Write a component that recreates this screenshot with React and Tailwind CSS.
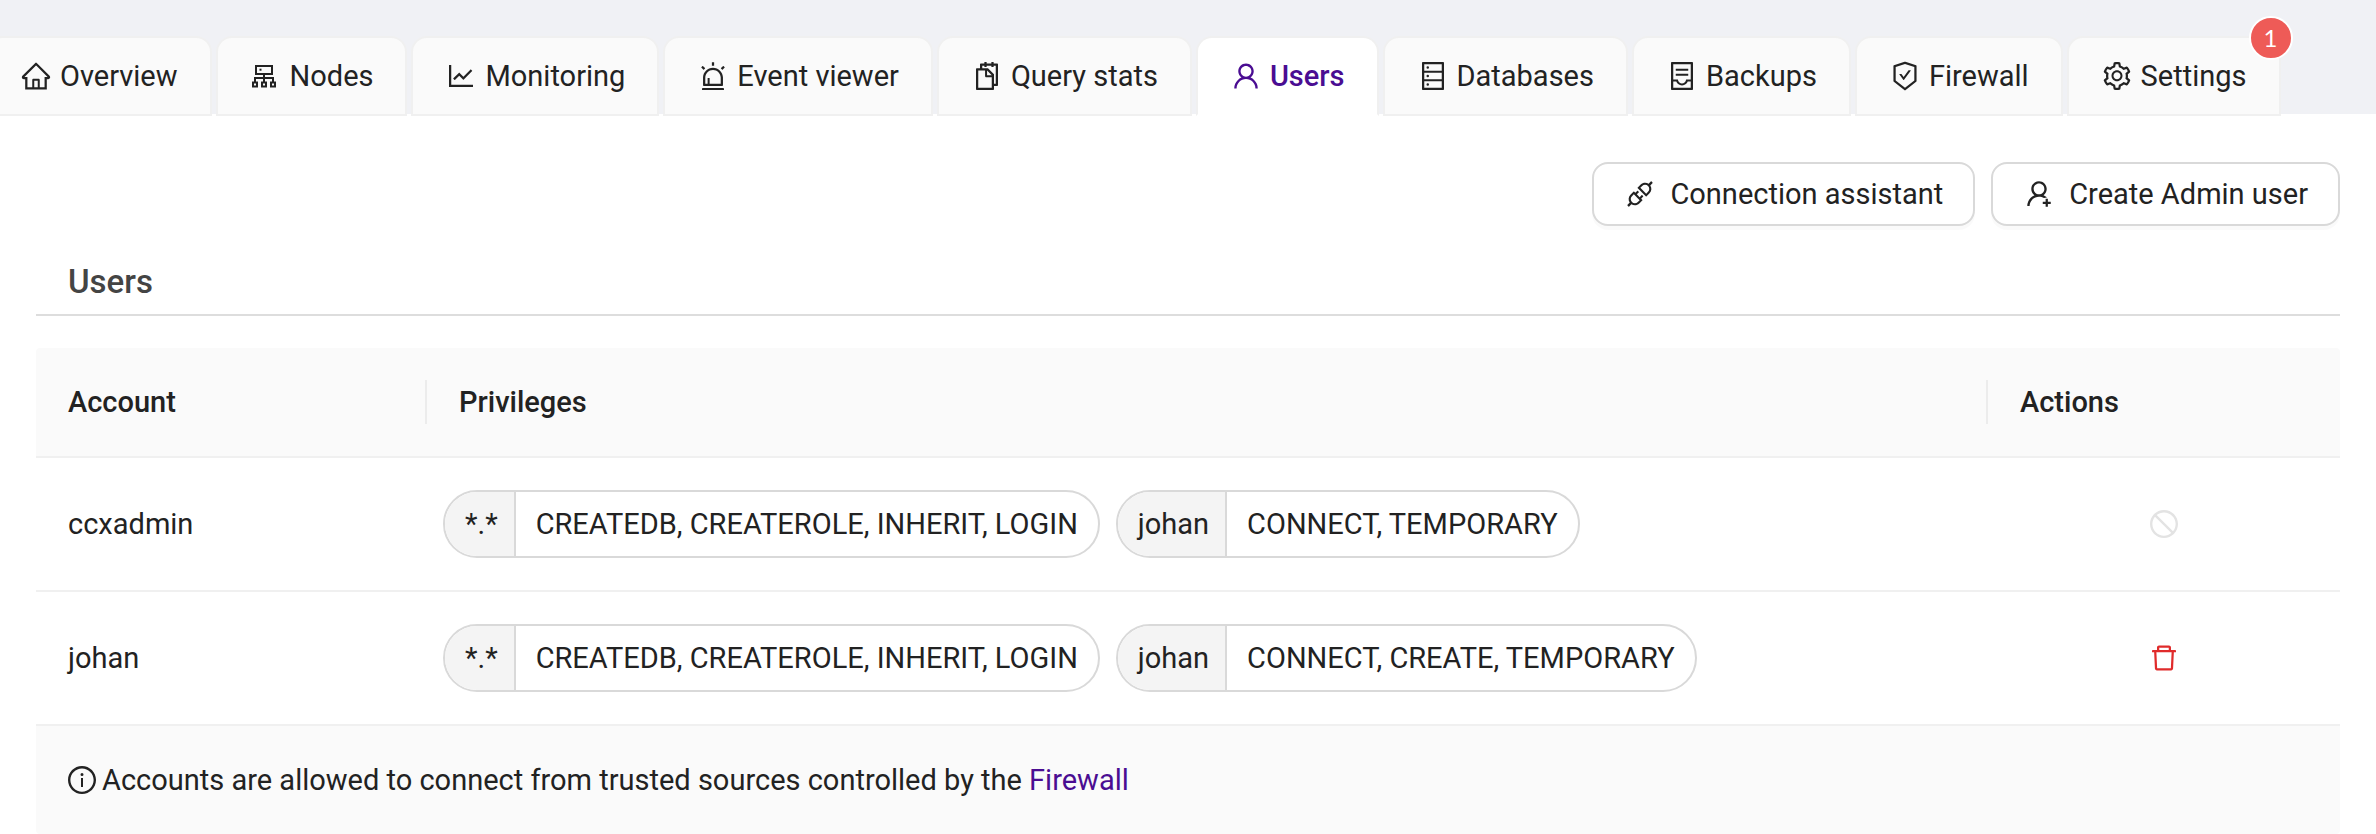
import React from "react";
import {
  AiOutlineHome,
  AiOutlineLineChart,
  AiOutlineAlert,
  AiOutlineSnippets,
  AiOutlineUser,
  AiOutlineDatabase,
  AiOutlineContainer,
  AiOutlineSafetyCertificate,
  AiOutlineSetting,
  AiOutlineApi,
  AiOutlineUserAdd,
  AiOutlineInfoCircle,
  AiOutlineDelete,
  AiOutlineStop,
} from "react-icons/ai";

function NodesIcon({ className }) {
  return (
    <svg className={className} viewBox="0 0 32 32" fill="none" stroke="currentColor" strokeWidth="2" aria-hidden="true">
      <path d="M6 6h16v8H6zM14 14v8M5 22v-4h18v4" />
      <path d="M3 22.5h4v4H3zM12 22.5h4v4h-4zM21 22.5h4v4h-4z" />
      <path d="M9.5 9.7h2" />
    </svg>
  );
}

const tabs = [
  { label: "Overview", Icon: AiOutlineHome },
  { label: "Nodes", Icon: NodesIcon },
  { label: "Monitoring", Icon: AiOutlineLineChart },
  { label: "Event viewer", Icon: AiOutlineAlert },
  { label: "Query stats", Icon: AiOutlineSnippets },
  { label: "Users", Icon: AiOutlineUser, active: true },
  { label: "Databases", Icon: AiOutlineDatabase },
  { label: "Backups", Icon: AiOutlineContainer },
  { label: "Firewall", Icon: AiOutlineSafetyCertificate },
  { label: "Settings", Icon: AiOutlineSetting, badge: 1 },
];

const users = [
  {
    account: "ccxadmin",
    locked: true,
    privileges: [
      { scope: "*.*", grants: "CREATEDB, CREATEROLE, INHERIT, LOGIN" },
      { scope: "johan", grants: "CONNECT, TEMPORARY" },
    ],
  },
  {
    account: "johan",
    privileges: [
      { scope: "*.*", grants: "CREATEDB, CREATEROLE, INHERIT, LOGIN" },
      { scope: "johan", grants: "CONNECT, CREATE, TEMPORARY" },
    ],
  },
];

function Tab({ label, Icon, active, badge }) {
  return (
    <button
      type="button"
      role="tab"
      aria-selected={Boolean(active)}
      className={
        "relative flex shrink-0 items-center gap-2 rounded-t-2xl border-2 border-[#f0f0f0] px-8 py-4 whitespace-nowrap " +
        (active ? "border-b-white bg-white font-medium text-[#4a0d92]" : "bg-[#fafafa]")
      }
    >
      <Icon className="size-8" />
      {label}
      {badge && (
        <span className="absolute -top-[22px] -right-3.5 flex size-11 items-center justify-center rounded-full border-2 border-white bg-[#ee5b57] font-[Lato,sans-serif] text-2xl text-white">
          {badge}
        </span>
      )}
    </button>
  );
}

function ActionButton({ Icon, children }) {
  return (
    <button
      type="button"
      className="flex h-16 items-center gap-3.5 rounded-2xl border-2 border-[#d9d9d9] bg-white px-[30px] shadow-[0_4px_0_rgba(0,0,0,0.02)]"
    >
      <Icon className="size-8" />
      {children}
    </button>
  );
}

function Privilege({ scope, grants }) {
  return (
    <div className="flex h-[68px] items-center overflow-hidden rounded-full border-2 border-[#d9d9d9]">
      <span className="flex h-full items-center border-r-2 border-[#d9d9d9] bg-[#f4f4f4] pr-4 pl-5">{scope}</span>
      <span className="px-5">{grants}</span>
    </div>
  );
}

export default function App() {
  return (
    <div className="min-h-screen bg-white font-[Roboto,sans-serif] text-[29px] leading-[44px] text-[#222222]">
      <nav className="bg-[linear-gradient(to_top,#ffffff_2px,#f0f1f5_2px)] pt-9">
        <div role="tablist" className="-ml-3.5 flex gap-1">
          {tabs.map((tab) => (
            <Tab key={tab.label} {...tab} />
          ))}
        </div>
      </nav>
      <main className="px-9 pt-[46px]">
        <div className="flex justify-end gap-4">
          <ActionButton Icon={AiOutlineApi}>Connection assistant</ActionButton>
          <ActionButton Icon={AiOutlineUserAdd}>Create Admin user</ActionButton>
        </div>
        <h2 className="mt-8 border-b-2 border-[#dddddd] px-8 pb-2 text-[33px] leading-[48px] font-medium text-[#444444]">Users</h2>
        <table className="mt-8 w-full table-fixed border-separate border-spacing-0 text-left">
          <colgroup>
            <col className="w-[391px]" />
            <col />
            <col className="w-[352px]" />
          </colgroup>
          <thead>
            <tr>
              <th className="rounded-tl-sm border-b-2 border-[#f0f0f0] bg-[#fafafa] py-8 font-medium">
                <div className="border-r-2 border-[#ececec] px-8">Account</div>
              </th>
              <th className="border-b-2 border-[#f0f0f0] bg-[#fafafa] py-8 font-medium">
                <div className="border-r-2 border-[#ececec] px-8">Privileges</div>
              </th>
              <th className="rounded-tr-sm border-b-2 border-[#f0f0f0] bg-[#fafafa] px-8 py-8 font-medium">Actions</th>
            </tr>
          </thead>
          <tbody>
            {users.map((user) => (
              <tr key={user.account}>
                <td className="border-b-2 border-[#f0f0f0] px-8">{user.account}</td>
                <td className="border-b-2 border-[#f0f0f0] px-4 py-8">
                  <div className="flex gap-4">
                    {user.privileges.map((p) => (
                      <Privilege key={p.scope} {...p} />
                    ))}
                  </div>
                </td>
                <td className="border-b-2 border-[#f0f0f0]">
                  <button
                    type="button"
                    disabled={user.locked}
                    aria-label={"Delete " + user.account}
                    className={"mx-auto flex " + (user.locked ? "text-[#e3e3e3]" : "text-[#e02b2b]")}
                  >
                    {user.locked ? <AiOutlineStop className="size-8" /> : <AiOutlineDelete className="size-8" />}
                  </button>
                </td>
              </tr>
            ))}
          </tbody>
          <tfoot>
            <tr>
              <td colSpan={3} className="rounded-b-sm bg-[#fafafa] px-[30px] py-8">
                <div className="flex items-center gap-1">
                  <AiOutlineInfoCircle className="size-8" />
                  <span>
                    Accounts are allowed to connect from trusted sources controlled by the{" "}
                    <a href="#firewall" className="text-[#4a0d92]">Firewall</a>
                  </span>
                </div>
              </td>
            </tr>
          </tfoot>
        </table>
      </main>
    </div>
  );
}
